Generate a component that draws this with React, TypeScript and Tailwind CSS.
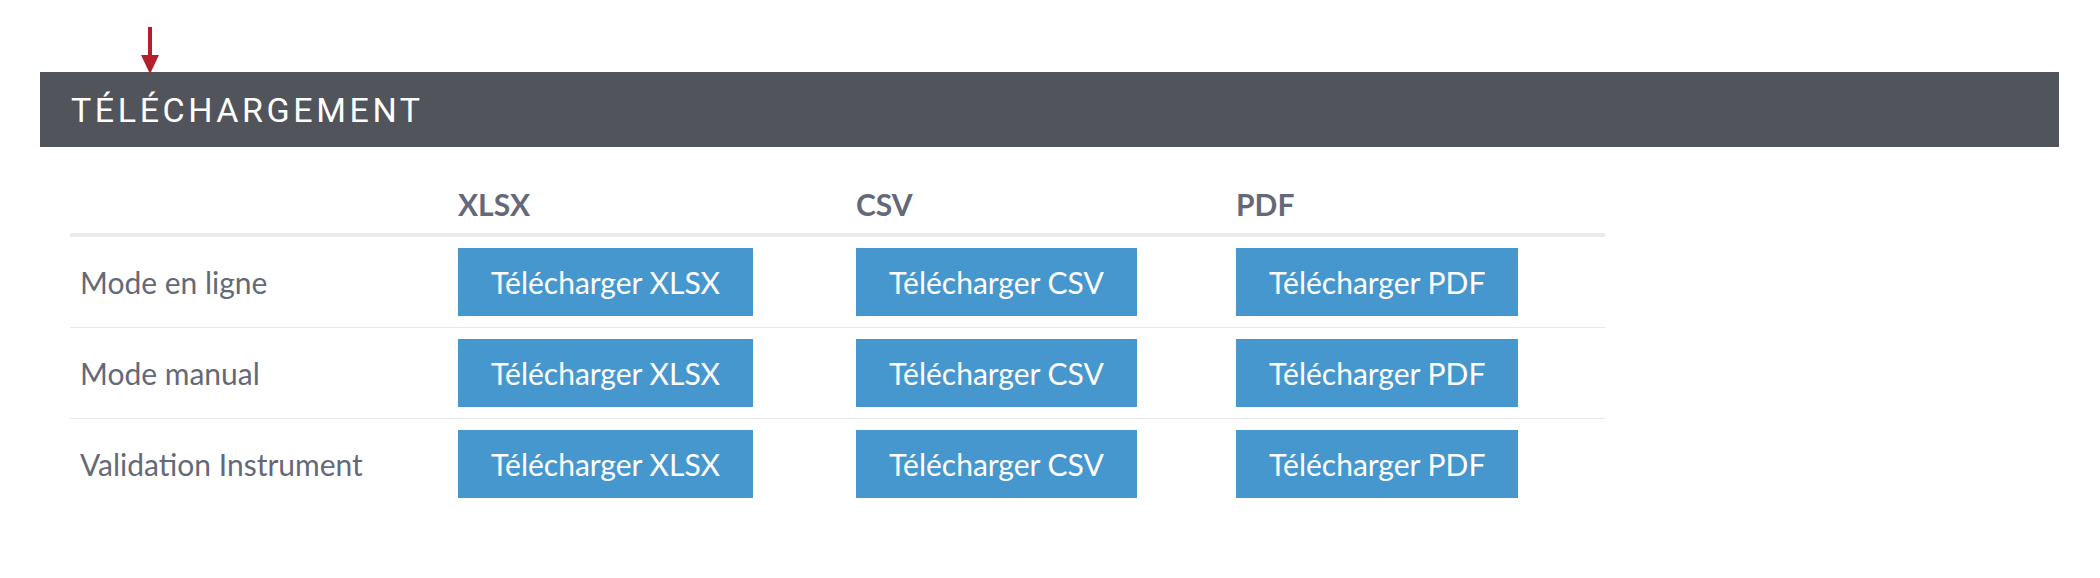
const formats = ['XLSX', 'CSV', 'PDF']
const modes = ['Mode en ligne', 'Mode manual', 'Validation Instrument']

function DownloadButton({ format }: { format: string }) {
  return (
    <button className="h-[68px] px-[33px] bg-[#4797cf] text-white text-[30px] leading-none whitespace-nowrap">
      Télécharger {format}
    </button>
  )
}

export default function App() {
  return (
    <div className="relative min-h-[578px] bg-white font-['Lato','Liberation_Sans',sans-serif]">
      {/* marker arrow pointing at the section title */}
      <svg className="absolute left-[141px] top-[27px]" width="18" height="48" viewBox="0 0 18 48">
        <rect x="7" y="0" width="4" height="29" fill="#b41f2d" />
        <polygon points="0,28 18,28 9,47" fill="#b41f2d" />
      </svg>

      <div className="pt-[72px] pl-[40px] pr-[41px]">
        <div className="h-[75px] bg-[#51545b] flex items-center pl-[31px]">
          <h2 className="text-white text-[34px] font-normal uppercase tracking-[0.105em] leading-none font-['Roboto',sans-serif]">
            Téléchargement
          </h2>
        </div>

        <div className="ml-[30px] w-[1535px] text-[30px]">
          <div className="grid grid-cols-[378px_398px_380px_379px] border-b-4 border-[#e9ebef] leading-[36px]">
            <div className="px-[10px] pt-[39px] pb-[11px]" />
            {formats.map((f) => (
              <div key={f} className="px-[10px] pt-[39px] pb-[11px] font-bold text-[#646978]">
                {f}
              </div>
            ))}
          </div>

          {modes.map((m, i) => (
            <div
              key={m}
              className={
                'grid grid-cols-[378px_398px_380px_379px] items-center py-[11px] ' +
                (i < modes.length - 1 ? 'border-b border-[#e6e8ec]' : '')
              }
            >
              <div className="px-[10px] text-[#646978]">{m}</div>
              {formats.map((f) => (
                <div key={f} className="px-[10px]">
                  <DownloadButton format={f} />
                </div>
              ))}
            </div>
          ))}
        </div>
      </div>
    </div>
  )
}
